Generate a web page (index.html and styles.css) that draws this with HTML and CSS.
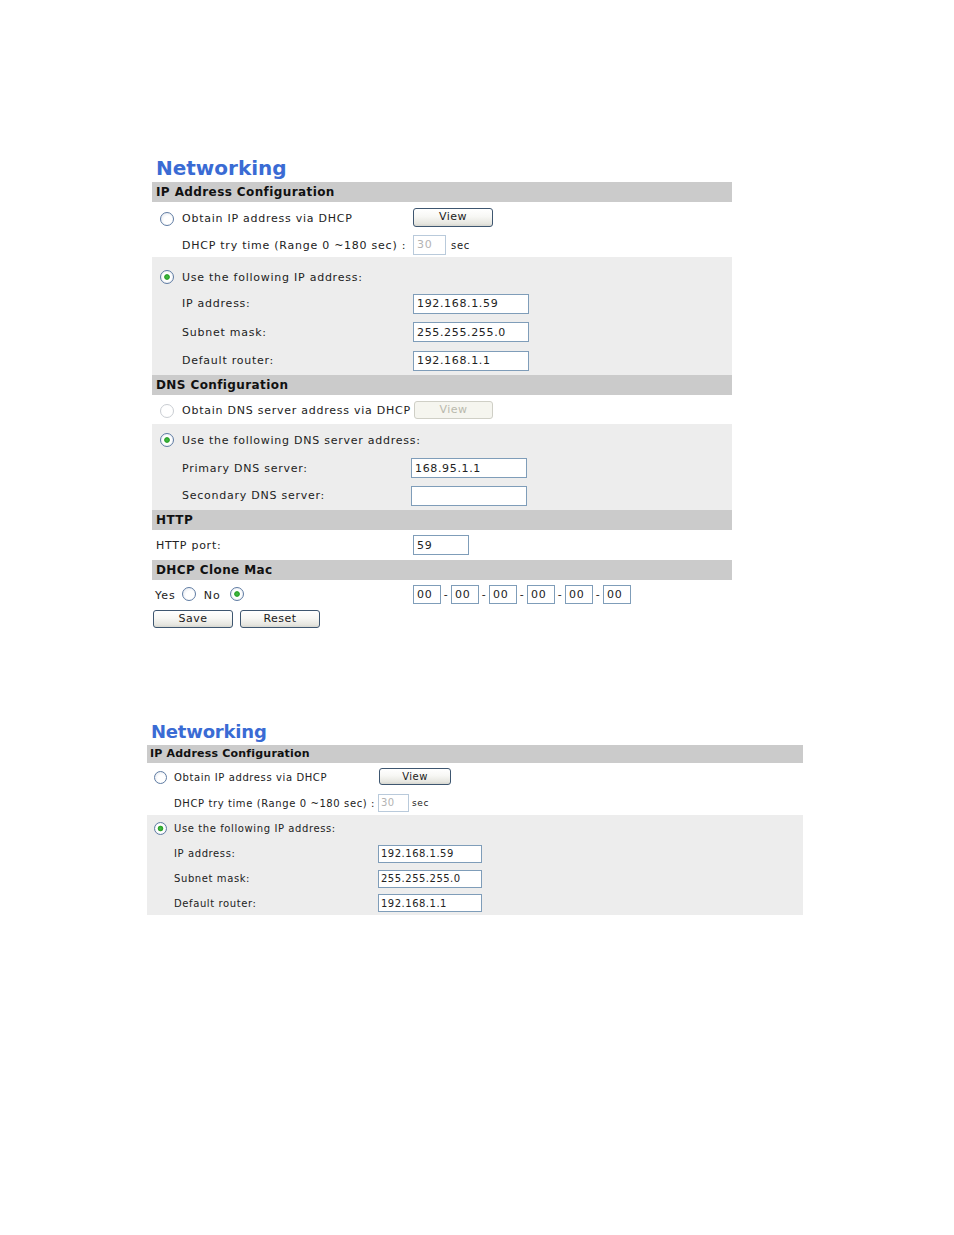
FILE: index.html
```html
<!DOCTYPE html>
<html>
<head>
<meta charset="utf-8">
<title>Networking</title>
<link rel="stylesheet" href="styles.css">
</head>
<body>
<div class="page">

  <section class="net net-a">
    <h1 class="title">Networking</h1>
    <div class="bar">IP Address Configuration</div>
    <div class="row h30">
      <div class="lab rad low3"><span class="radio"></span><span>Obtain IP address via DHCP</span></div>
      <div class="val"><button class="btn">View</button></div>
    </div>
    <div class="row h25">
      <div class="lab low2">DHCP try time (Range 0 ~180 sec) :</div>
      <div class="val"><input class="inp w-try dis" type="text" value="30" disabled><span class="unit low2">sec</span></div>
    </div>
    <div class="band">
      <div class="row h32 pt8">
        <div class="lab rad"><span class="radio on"></span><span>Use the following IP address:</span></div>
        <div class="val"></div>
      </div>
      <div class="row h29">
        <div class="lab">IP address:</div>
        <div class="val"><input class="inp w-ip" type="text" value="192.168.1.59"></div>
      </div>
      <div class="row h28">
        <div class="lab">Subnet mask:</div>
        <div class="val"><input class="inp w-ip" type="text" value="255.255.255.0"></div>
      </div>
      <div class="row h29">
        <div class="lab">Default router:</div>
        <div class="val"><input class="inp w-ip" type="text" value="192.168.1.1"></div>
      </div>
    </div>

    <div class="bar">DNS Configuration</div>
    <div class="row h29">
      <div class="lab rad low2"><span class="radio off"></span><span>Obtain DNS server address via DHCP</span></div>
      <div class="val"><button class="btn dis-btn" disabled>View</button></div>
    </div>
    <div class="band">
      <div class="row h31">
        <div class="lab rad low1"><span class="radio on"></span><span>Use the following DNS server address:</span></div>
        <div class="val"></div>
      </div>
      <div class="row h26">
        <div class="lab">Primary DNS server:</div>
        <div class="val shift"><input class="inp w-ip" type="text" value="168.95.1.1"></div>
      </div>
      <div class="row h29">
        <div class="lab">Secondary DNS server:</div>
        <div class="val shift"><input class="inp w-ip" type="text" value=""></div>
      </div>
    </div>

    <div class="bar">HTTP</div>
    <div class="row h30">
      <div class="lab plain">HTTP port:</div>
      <div class="val"><input class="inp w-port" type="text" value="59"></div>
    </div>

    <div class="bar">DHCP Clone Mac</div>
    <div class="row h28">
      <div class="lab yesno"><span class="yes low2">Yes</span><span class="radio"></span><span class="no low2">No</span><span class="radio on"></span></div>
      <div class="val mac">
        <input class="inp w-mac" type="text" value="00"><span class="dash">-</span>
        <input class="inp w-mac" type="text" value="00"><span class="dash">-</span>
        <input class="inp w-mac" type="text" value="00"><span class="dash">-</span>
        <input class="inp w-mac" type="text" value="00"><span class="dash">-</span>
        <input class="inp w-mac" type="text" value="00"><span class="dash">-</span>
        <input class="inp w-mac" type="text" value="00">
      </div>
    </div>
    <div class="actions">
      <button class="btn">Save</button>
      <button class="btn">Reset</button>
    </div>
  </section>

  <section class="net net-b">
    <h1 class="title">Networking</h1>
    <div class="bar">IP Address Configuration</div>
    <div class="row h27">
      <div class="lab rad low1"><span class="radio"></span><span>Obtain IP address via DHCP</span></div>
      <div class="val"><button class="btn">View</button></div>
    </div>
    <div class="row h25">
      <div class="lab low1">DHCP try time (Range 0 ~180 sec) :</div>
      <div class="val"><input class="inp w-try dis" type="text" value="30" disabled><span class="unit low1">sec</span></div>
    </div>
    <div class="band">
      <div class="row h26">
        <div class="lab rad low1"><span class="radio on"></span><span>Use the following IP address:</span></div>
        <div class="val"></div>
      </div>
      <div class="row h25">
        <div class="lab">IP address:</div>
        <div class="val"><input class="inp w-ip" type="text" value="192.168.1.59"></div>
      </div>
      <div class="row h25">
        <div class="lab">Subnet mask:</div>
        <div class="val"><input class="inp w-ip" type="text" value="255.255.255.0"></div>
      </div>
      <div class="row h24">
        <div class="lab low1">Default router:</div>
        <div class="val"><input class="inp w-ip" type="text" value="192.168.1.1"></div>
      </div>
    </div>
  </section>

</div>
</body>
</html>
```
FILE: styles.css
```css
body {
  margin: 0;
  background: #ffffff;
  color: #222222;
  font-family: "DejaVu Sans", Verdana, sans-serif;
}

.page {
  padding-top: 156px;
}

.net-a {
  margin-left: 152px;
  width: 580px;
  font-size: 11px;
  letter-spacing: 0.75px;
}

.net-b {
  margin-left: 147px;
  margin-top: 93px;
  width: 656px;
  font-size: 10px;
  letter-spacing: 0.6px;
}

.title {
  margin: 0 0 2px 4px;
  font-size: 20px;
  line-height: 24px;
  font-weight: bold;
  letter-spacing: 0;
  color: #3a6bd4;
}

.net-b .title {
  font-size: 18px;
  line-height: 22px;
  letter-spacing: -0.2px;
}

.bar {
  height: 20px;
  line-height: 20px;
  background: #cbcbcb;
  color: #111111;
  font-weight: bold;
  font-size: 12px;
  letter-spacing: 0.4px;
  padding-left: 4px;
}

.net-b .bar {
  height: 18px;
  line-height: 18px;
  font-size: 11px;
  letter-spacing: 0.2px;
  padding-left: 3px;
}

.band {
  background: #ededed;
}

.row {
  display: grid;
  grid-template-columns: 261px 1fr;
  align-items: center;
  box-sizing: border-box;
}

.net-b .row {
  grid-template-columns: 231px 1fr;
}

.h24 { height: 24px; }
.h25 { height: 25px; }
.h26 { height: 26px; }
.h27 { height: 27px; }
.h28 { height: 28px; }
.h29 { height: 29px; }
.h30 { height: 30px; }
.h31 { height: 31px; }
.h32 { height: 32px; }
.pt8 { padding-top: 8px; }

.low1 { padding-top: 1px; }
.low2 { padding-top: 2px; }
.low3 { padding-top: 3px; }

.lab {
  display: flex;
  align-items: center;
  padding-left: 30px;
  white-space: nowrap;
}

.lab.rad {
  padding-left: 8px;
  gap: 8px;
}

.lab.plain {
  padding-left: 4px;
}

.net-b .lab {
  padding-left: 27px;
}

.net-b .lab.rad {
  padding-left: 7px;
  gap: 7px;
}

.lab.yesno {
  padding-left: 3px;
  gap: 0;
}

.lab.yesno .yes {
  letter-spacing: 1px;
  margin-right: 6px;
}

.lab.yesno .no {
  letter-spacing: 1px;
  margin-left: 8px;
  margin-right: 9px;
}

.val {
  display: flex;
  align-items: center;
}

.val.shift {
  margin-left: -2px;
}

.radio {
  display: inline-block;
  box-sizing: border-box;
  width: 14px;
  height: 14px;
  border: 1px solid #5f7ca3;
  border-radius: 50%;
  background: radial-gradient(circle at 60% 60%, #ffffff 0, #ffffff 40%, #dde2ea 100%);
  flex: none;
}

.radio.on {
  background: radial-gradient(circle, #45c045 0, #2aa02a 2.4px, #ffffff 3.2px, #ffffff 4px, #dde2ea 100%);
}

.radio.off {
  border-color: #c9cdd2;
  background: #ffffff;
}

.net-b .radio {
  width: 13px;
  height: 13px;
}

.inp {
  box-sizing: border-box;
  height: 20px;
  margin: 0;
  border: 1px solid #7f9db9;
  background: #ffffff;
  color: #222222;
  font-family: "DejaVu Sans", Verdana, sans-serif;
  font-size: 11px;
  letter-spacing: 0.65px;
  padding: 0 3px;
  outline: none;
}

.net-b .inp {
  height: 18px;
  font-size: 10px;
  letter-spacing: 0.5px;
  padding: 0 2px;
}

.inp.dis {
  border-color: #b9cadb;
  color: #b3b3b3;
  height: 20px;
}

.net-b .inp.dis {
  height: 18px;
}

.w-try { width: 33px; }
.w-ip { width: 116px; }
.w-port { width: 56px; }
.w-mac { width: 28px; height: 19px; }
.net-b .w-try { width: 31px; }
.net-b .w-ip { width: 104px; }

.unit {
  margin-left: 5px;
  font-size: 10px;
}

.net-b .unit {
  margin-left: 3px;
  font-size: 9px;
}

.dash {
  display: inline-block;
  width: 10px;
  text-align: center;
}

.btn {
  box-sizing: border-box;
  width: 80px;
  height: 19px;
  margin: 0;
  padding: 0;
  border: 1px solid #3e5670;
  border-radius: 3px;
  background: linear-gradient(#ffffff 0%, #f7f7f4 45%, #e6e6e0 85%, #d6d6cf 100%);
  color: #1a1a1a;
  font-family: "DejaVu Sans", Verdana, sans-serif;
  font-size: 11px;
  letter-spacing: 0.5px;
  line-height: 16px;
}

.btn.dis-btn {
  width: 79px;
  margin-left: 1px;
  height: 18px;
  border-color: #cfcfc6;
  background: #f5f5ef;
  color: #b9b9ad;
}

.net-b .btn {
  width: 72px;
  height: 17px;
  font-size: 10px;
  line-height: 14px;
  margin-left: 1px;
}

.actions {
  display: flex;
  gap: 7px;
  padding-top: 2px;
  padding-left: 1px;
}

.actions .btn {
  height: 18px;
}
```
